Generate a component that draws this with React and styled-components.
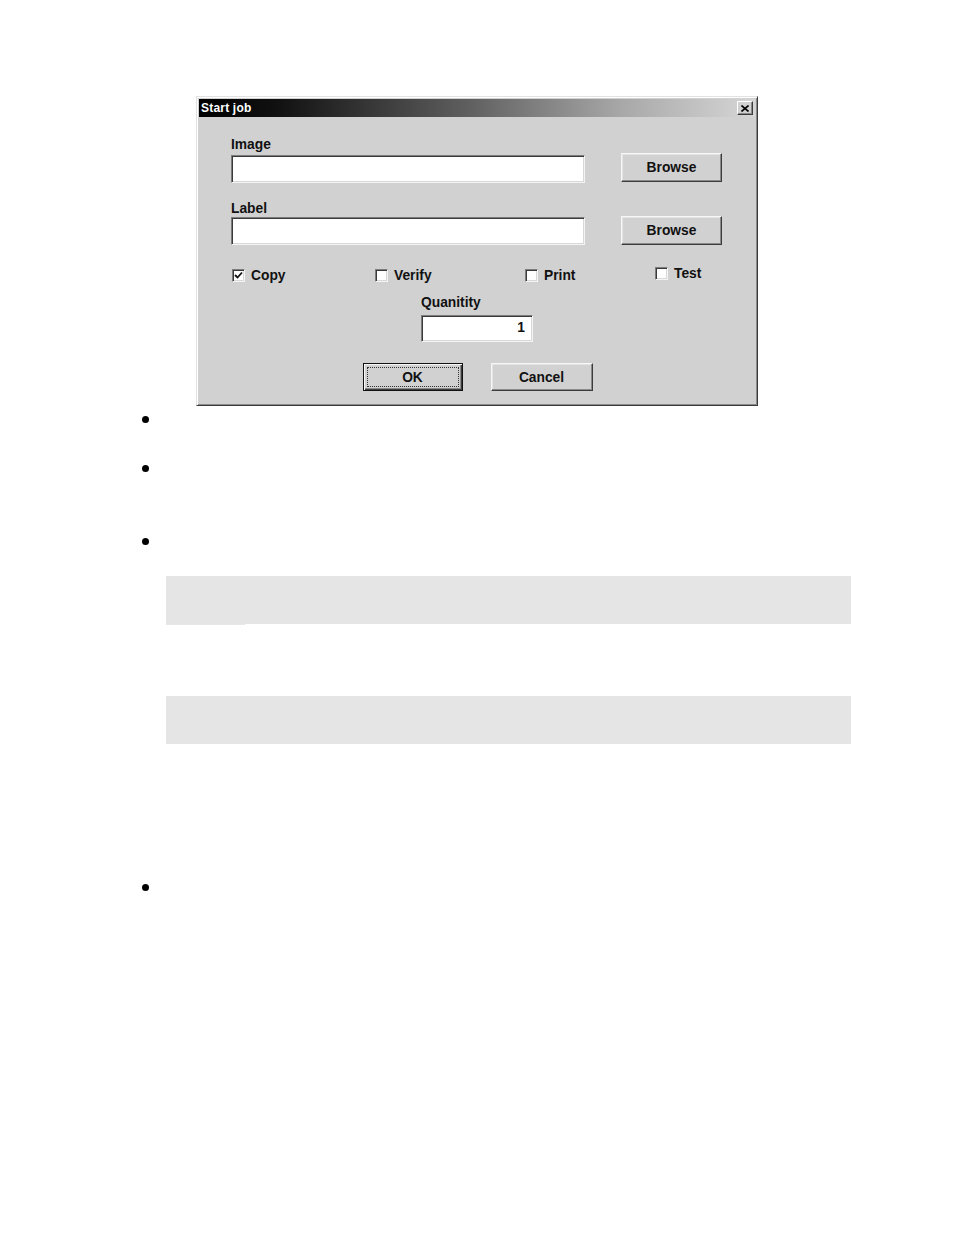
import React from 'react'
import styled, { createGlobalStyle } from 'styled-components'

const GlobalStyle = createGlobalStyle`
  html, body {
    margin: 0;
    padding: 0;
    background: #ffffff;
  }
  body {
    font-family: "Liberation Sans", Arial, sans-serif;
  }
`

const Page = styled.div`
  width: 954px;
  min-height: 1235px;
  padding-top: 96px;
  box-sizing: border-box;
`

const Dialog = styled.div`
  margin-left: 196px;
  width: 562px;
  height: 310px;
  box-sizing: border-box;
  background: #d1d1d1;
  border: 1px solid;
  border-color: #e2e2e2 #3c3c3c #3c3c3c #e2e2e2;
  box-shadow: inset 1px 1px #ffffff, inset -1px -1px #8a8a8a;
  padding: 2px;
  display: flex;
  flex-direction: column;
`

const TitleBar = styled.div`
  height: 18px;
  display: flex;
  align-items: center;
  justify-content: space-between;
  padding: 0 2px 0 2px;
  background: linear-gradient(to right, #000000 0%, #111111 14%, #5e5e5e 48%, #a8a8a8 76%, #d6d6d6 100%);
`

const Title = styled.span`
  color: #ffffff;
  font-weight: bold;
  font-size: 12px;
  letter-spacing: 0.2px;
`

const CloseButton = styled.div`
  width: 16px;
  height: 14px;
  box-sizing: border-box;
  background: #d1d1d1;
  border: 1px solid;
  border-color: #ffffff #3c3c3c #3c3c3c #ffffff;
  box-shadow: inset -1px -1px #8a8a8a;
  display: flex;
  align-items: center;
  justify-content: center;
`

const Body = styled.div`
  flex: 1;
  padding: 20px 33px 0 32px;
  display: flex;
  flex-direction: column;
`

const FieldLabel = styled.div`
  font-size: 13.8px;
  font-weight: bold;
  line-height: 16px;
  color: #111;
  margin-top: ${p => p.$top || 0}px;
`

const FieldRow = styled.div`
  display: flex;
  justify-content: space-between;
  align-items: flex-start;
  margin-top: ${p => p.$top || 0}px;
`

const TextBox = styled.div`
  width: ${p => p.$w}px;
  height: ${p => p.$h}px;
  margin-top: ${p => p.$top || 0}px;
  box-sizing: border-box;
  background: #ffffff;
  border: 1px solid;
  border-color: #7c7c7c #f4f4f4 #f4f4f4 #7c7c7c;
  box-shadow: inset 1px 1px #3a3a3a, inset -1px -1px #d8d8d8;
  display: flex;
  align-items: center;
  justify-content: flex-end;
  padding: 0 7px 2px 0;
  font-size: 13.8px;
  font-weight: bold;
  color: #111;
`

const Button = styled.div`
  width: ${p => p.$w}px;
  height: ${p => p.$h}px;
  margin-top: ${p => p.$top || 0}px;
  box-sizing: border-box;
  background: #d1d1d1;
  border: 1px solid;
  border-color: #f6f6f6 #3c3c3c #3c3c3c #f6f6f6;
  box-shadow: inset -1px -1px #8a8a8a, inset 1px 1px #e4e4e4;
  display: flex;
  align-items: center;
  justify-content: center;
  font-size: 13.8px;
  font-weight: bold;
  color: #111;
`

const DefaultButton = styled(Button)`
  border: 1px solid #111;
  box-shadow: inset 1px 1px #f6f6f6, inset -1px -1px #3c3c3c, inset -2px -2px #8a8a8a;
  padding: 3px;
`

const FocusRing = styled.div`
  flex: 1;
  align-self: stretch;
  border: 1px dotted #333;
  display: flex;
  align-items: center;
  justify-content: center;
`

const OptionsRow = styled.div`
  display: grid;
  grid-template-columns: 143px 150px 130px 1fr;
  margin-top: 21px;
  height: 18px;
`

const Option = styled.label`
  display: flex;
  align-items: center;
  gap: 6px;
  font-size: 13.8px;
  font-weight: bold;
  color: #111;
  margin-top: ${p => p.$shift || 0}px;
  padding-left: 1px;
`

const Box = styled.span`
  width: 13px;
  height: 13px;
  box-sizing: border-box;
  background: #ffffff;
  border: 1px solid;
  border-color: #7c7c7c #f4f4f4 #f4f4f4 #7c7c7c;
  box-shadow: inset 1px 1px #3a3a3a, inset -1px -1px #d8d8d8;
  display: flex;
  align-items: center;
  justify-content: center;
`

const QuantityBlock = styled.div`
  align-self: center;
  margin-top: 11px;
  margin-left: 1px;
  display: flex;
  flex-direction: column;
`

const ActionRow = styled.div`
  display: flex;
  justify-content: center;
  gap: 28px;
  margin-top: 21px;
  margin-left: 2px;
`

const Notes = styled.div`
  display: flex;
  flex-direction: column;
`

const Bullet = styled.div`
  width: 7px;
  height: 7px;
  border-radius: 50%;
  background: #000;
  margin-left: 142px;
  margin-top: ${p => p.$top}px;
`

const Shade = styled.div`
  width: 685px;
  height: 48px;
  margin-left: 166px;
  background: #e5e5e5;
  margin-top: ${p => p.$top}px;
`

const ShadeTail = styled.div`
  width: 79px;
  height: 1px;
  margin-left: 166px;
  background: #e8e8e8;
`

function CheckOption({ label, checked, shift }) {
  return (
    <Option $shift={shift}>
      <Box>
        {checked && (
          <svg width="9" height="9" viewBox="0 0 9 9">
            <path d="M1 4 L3.5 6.5 L8 1.5" fill="none" stroke="#111" strokeWidth="1.8" />
          </svg>
        )}
      </Box>
      {label}
    </Option>
  )
}

export default function App() {
  return (
    <Page>
      <GlobalStyle />
      <Dialog>
        <TitleBar>
          <Title>Start job</Title>
          <CloseButton>
            <svg width="8" height="7" viewBox="0 0 8 7">
              <path d="M0.5 0.5 L7.5 6.5 M7.5 0.5 L0.5 6.5" stroke="#000" strokeWidth="1.6" />
            </svg>
          </CloseButton>
        </TitleBar>
        <Body>
          <FieldLabel>Image</FieldLabel>
          <FieldRow $top={2}>
            <TextBox $w={354} $h={28} />
            <Button $w={101} $h={29} $top={-2}>Browse</Button>
          </FieldRow>
          <FieldLabel $top={18}>Label</FieldLabel>
          <FieldRow $top={0}>
            <TextBox $w={354} $h={28} />
            <Button $w={101} $h={29} $top={-1}>Browse</Button>
          </FieldRow>
          <OptionsRow>
            <CheckOption label="Copy" checked />
            <CheckOption label="Verify" />
            <CheckOption label="Print" />
            <CheckOption label="Test" shift={-3} />
          </OptionsRow>
          <QuantityBlock>
            <FieldLabel>Quanitity</FieldLabel>
            <TextBox $w={112} $h={27} $top={4}>1</TextBox>
          </QuantityBlock>
          <ActionRow>
            <DefaultButton $w={100} $h={28}>
              <FocusRing>OK</FocusRing>
            </DefaultButton>
            <Button $w={102} $h={28}>Cancel</Button>
          </ActionRow>
        </Body>
      </Dialog>
      <Notes>
        <Bullet $top={10} />
        <Bullet $top={42} />
        <Bullet $top={66} />
        <Shade $top={31} />
        <ShadeTail />
        <Shade $top={71} />
        <Bullet $top={140} />
      </Notes>
    </Page>
  )
}
